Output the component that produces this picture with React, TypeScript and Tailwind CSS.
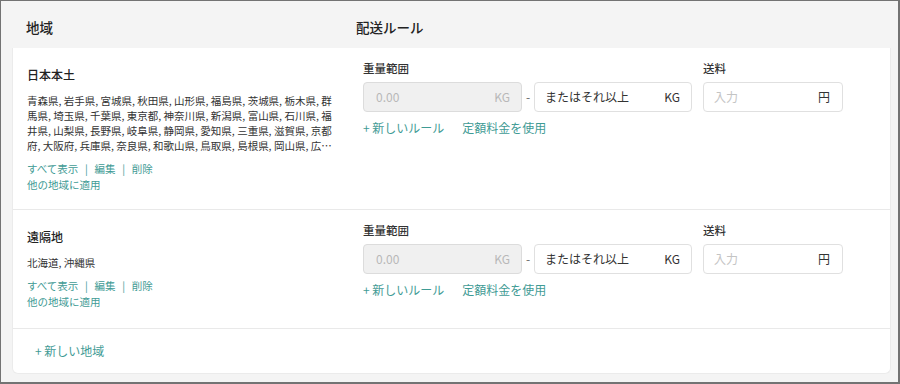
const PREFS =
  '青森県, 岩手県, 宮城県, 秋田県, 山形県, 福島県, 茨城県, 栃木県, 群馬県, 埼玉県, 千葉県, 東京都, 神奈川県, 新潟県, 富山県, 石川県, 福井県, 山梨県, 長野県, 岐阜県, 静岡県, 愛知県, 三重県, 滋賀県, 京都府, 大阪府, 兵庫県, 奈良県, 和歌山県, 鳥取県, 島根県, 岡山県, 広島県, 山口県, 徳島県, 香川県, 愛媛県, 高知県, 福岡県, 佐賀県, 長崎県, 熊本県, 大分県, 宮崎県, 鹿児島県';

type Zone = { name: string; regions: string };

const ZONES: Zone[] = [
  { name: '日本本土', regions: PREFS },
  { name: '遠隔地', regions: '北海道, 沖縄県' },
];

function RuleEditor() {
  return (
    <div className="flex flex-col pt-3 pb-[30px]">
      <div className="flex items-start">
        <div className="flex flex-col">
          <span className="text-[11.5px] leading-4 font-medium text-[#333]">重量範囲</span>
          <div className="mt-1.5 flex items-center">
            <div className="flex h-[30px] w-[159px] items-center justify-between rounded-[4px] border border-[#dcdcdc] bg-[#f0f0f0] pr-[11px] pl-3 text-[12px] text-[#b8b8b8]">
              <input
                disabled
                readOnly
                value="0.00"
                className="w-20 bg-transparent text-[#b8b8b8] outline-none"
              />
              <span>KG</span>
            </div>
            <span className="w-3 text-center text-[12px] text-[#666]">-</span>
            <div className="flex h-[30px] w-[158px] items-center justify-between rounded-[4px] border border-[#e0e0e0] bg-white pr-[11px] pl-2.5 text-[12px] text-[#333]">
              <span>またはそれ以上</span>
              <span>KG</span>
            </div>
          </div>
        </div>
        <div className="ml-[11px] flex flex-col">
          <span className="text-[11.5px] leading-4 font-medium text-[#333]">送料</span>
          <div className="mt-1.5 flex h-[30px] w-[140px] items-center justify-between rounded-[4px] border border-[#e0e0e0] bg-white pr-3 pl-2.5 text-[12px] text-[#333]">
            <input
              placeholder="入力"
              className="w-16 bg-transparent outline-none placeholder:text-[#c4c4c4]"
            />
            <span>円</span>
          </div>
        </div>
      </div>
      <div className="mt-2 flex gap-[18px] text-[12px] leading-4 text-[#3f9b95]">
        <button type="button">+ 新しいルール</button>
        <button type="button">定額料金を使用</button>
      </div>
    </div>
  );
}

function ZoneRow({ zone }: { zone: Zone }) {
  return (
    <div className="flex border-b border-[#e9e9e9] px-[14px]">
      <div className="flex w-[336px] shrink-0 flex-col pt-[17px] pb-4">
        <h3 className="text-[12px] leading-5 font-medium text-[#222]">{zone.name}</h3>
        <p className="mt-2 line-clamp-4 w-[307px] text-[10.5px] leading-[15px] text-[#333]">
          {zone.regions}
        </p>
        <div className="mt-2 flex flex-col items-start text-[10.5px] leading-4 text-[#3f9b95]">
          <span className="whitespace-pre [word-spacing:1px]">{'すべて表示  |  編集  |  削除'}</span>
          <span>他の地域に適用</span>
        </div>
      </div>
      <RuleEditor />
    </div>
  );
}

export default function App() {
  return (
    <div
      className="flex h-[384px] w-[900px] flex-col border-t border-r-2 border-b-2 border-l border-[#737373] bg-[#f4f4f4] pr-[7px] pl-[11px]"
      style={{ fontFamily: '"Noto Sans CJK JP", "Noto Sans", sans-serif' }}
    >
      <div className="flex h-[47px] shrink-0 items-center pt-1.5 pl-[14px] text-[13.5px] font-medium text-[#222]">
        <span className="w-[330px]">地域</span>
        <span>配送ルール</span>
      </div>
      <div className="flex flex-col rounded-b-md border-x border-b border-[#ebebeb] bg-white">
        {ZONES.map((z) => (
          <ZoneRow key={z.name} zone={z} />
        ))}
        <div className="flex h-[44px] items-center pl-[22px]">
          <button type="button" className="text-[12px] text-[#3f9b95]">
            + 新しい地域
          </button>
        </div>
      </div>
    </div>
  );
}
